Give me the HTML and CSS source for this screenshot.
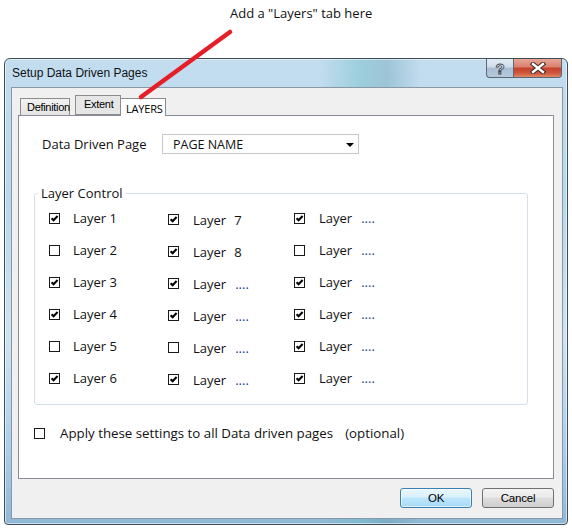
FILE: index.html
```html
<!DOCTYPE html>
<html>
<head>
<meta charset="utf-8">
<title>Setup Data Driven Pages</title>
<link rel="stylesheet" href="styles.css">
</head>
<body>
<div class="caption">Add a "Layers" tab here</div>
<svg class="annot" width="572" height="130" viewBox="0 0 572 130"><line x1="230" y1="32" x2="141" y2="97" stroke="#e61e27" stroke-width="4.5" stroke-linecap="round"/></svg>
<div class="window">
  <div class="titlebar">
    <span class="title">Setup Data Driven Pages</span>
    <div class="capbtns">
      <span class="capbtn help">?</span>
      <span class="capbtn close"><svg width="16" height="12" viewBox="0 0 16 12"><path d="M3 2 L13 10 M13 2 L3 10" stroke="#3a2a2a" stroke-width="4.4" stroke-linecap="square"/><path d="M3 2 L13 10 M13 2 L3 10" stroke="#fff" stroke-width="2.4" stroke-linecap="square"/></svg></span>
    </div>
  </div>
  <div class="client">
    <div class="tabs">
      <span class="tab">Definition</span>
      <span class="tab raised">Extent</span>
      <span class="tab active">LAYERS</span>
    </div>
    <div class="panel">
      <div class="ddp-row">
        <span class="lbl">Data Driven Page</span>
        <div class="select"><span>PAGE NAME</span><span class="arrow"></span></div>
      </div>
      <fieldset class="group">
        <legend>Layer Control</legend>
        <div class="grid">
          <div class="item"><span class="cb on"></span><span class="txt">Layer 1</span></div>
          <div class="item c2"><span class="cb on"></span><span class="txt">Layer<span class="num">7</span></span></div>
          <div class="item c3"><span class="cb on"></span><span class="txt">Layer<span class="dots">....</span></span></div>

          <div class="item"><span class="cb"></span><span class="txt">Layer 2</span></div>
          <div class="item c2"><span class="cb on"></span><span class="txt">Layer<span class="num">8</span></span></div>
          <div class="item c3"><span class="cb"></span><span class="txt">Layer<span class="dots">....</span></span></div>

          <div class="item"><span class="cb on"></span><span class="txt">Layer 3</span></div>
          <div class="item c2"><span class="cb on"></span><span class="txt">Layer<span class="dots">....</span></span></div>
          <div class="item c3"><span class="cb on"></span><span class="txt">Layer<span class="dots">....</span></span></div>

          <div class="item"><span class="cb on"></span><span class="txt">Layer 4</span></div>
          <div class="item c2"><span class="cb on"></span><span class="txt">Layer<span class="dots">....</span></span></div>
          <div class="item c3"><span class="cb on"></span><span class="txt">Layer<span class="dots">....</span></span></div>

          <div class="item"><span class="cb"></span><span class="txt">Layer 5</span></div>
          <div class="item c2"><span class="cb"></span><span class="txt">Layer<span class="dots">....</span></span></div>
          <div class="item c3"><span class="cb on"></span><span class="txt">Layer<span class="dots">....</span></span></div>

          <div class="item"><span class="cb on"></span><span class="txt">Layer 6</span></div>
          <div class="item c2"><span class="cb on"></span><span class="txt">Layer<span class="dots">....</span></span></div>
          <div class="item c3"><span class="cb on"></span><span class="txt">Layer<span class="dots">....</span></span></div>
        </div>
      </fieldset>
      <div class="apply">
        <span class="cb"></span>
        <span class="apply-txt">Apply these settings to all Data driven pages</span>
        <span class="opt">(optional)</span>
      </div>
    </div>
    <div class="footer">
      <span class="btn default">OK</span>
      <span class="btn">Cancel</span>
    </div>
  </div>
</div>
</body>
</html>
```

FILE: styles.css
```css
* { box-sizing: border-box; }
html, body { margin: 0; padding: 0; }
body {
  width: 572px;
  height: 528px;
  background: #fff;
  font-family: "Open Sans", "Noto Sans", sans-serif;
  color: #111;
  overflow: hidden;
  position: relative;
}
.caption {
  height: 58px;
  padding: 4px 0 0 230px;
  font-size: 13px;
  line-height: 18px;
  color: #111;
}
.annot {
  position: absolute;
  left: 0;
  top: 0;
  pointer-events: none;
  z-index: 5;
}
.window {
  margin-left: 4px;
  width: 564px;
  height: 467px;
  border: 1px solid #3f4d58;
  border-radius: 6px 6px 4px 4px;
  padding: 0 4px 5px 6px;
  display: flex;
  flex-direction: column;
  background:
    linear-gradient(90deg, rgba(255,255,255,0) 0, rgba(255,255,255,0) 56%, rgba(110,190,200,0.45) 63%, rgba(90,150,170,0.35) 68%, rgba(255,255,255,0) 74%),
    linear-gradient(180deg, #c3ddef 0, #b8d8ec 30%, #cfe3f2 60%, #a8cdeb 85%, #8fb7d6 100%);
  box-shadow: inset 0 0 0 1px rgba(255,255,255,0.55);
}
.titlebar {
  height: 28px;
  display: flex;
  align-items: flex-start;
  justify-content: space-between;
  padding-left: 1px;
}
.title {
  font-family: "Liberation Sans", Arial, sans-serif;
  font-size: 12px;
  line-height: 28px;
  color: #111;
}
.capbtns {
  display: flex;
  margin-right: 1px;
}
.capbtn {
  height: 19px;
  display: flex;
  align-items: center;
  justify-content: center;
  border: 1px solid #5b6772;
  border-top: none;
}
.help {
  width: 27px;
  border-radius: 0 0 0 4px;
  border-right: none;
  background: linear-gradient(180deg, #e2ebf4 0, #cfdcea 45%, #a9bed3 50%, #b7cadc 100%);
  font-family: "Liberation Sans", Arial, sans-serif;
  font-weight: bold;
  font-size: 15px;
  color: #f4f6f8;
  -webkit-text-stroke: 0.9px #3a4550;
}
.close {
  width: 49px;
  border-radius: 0 0 4px 0;
  background: linear-gradient(180deg, #e9a596 0, #d9806c 45%, #c4402a 50%, #d05a3f 80%, #e08a68 100%);
}
.client {
  flex: 1;
  background: #f0f0f0;
  border: 1px solid #8a98a5;
  display: flex;
  flex-direction: column;
  padding: 0 8px 0 6px;
}
.tabs {
  height: 27px;
  display: flex;
  align-items: flex-end;
  padding-left: 2px;
  position: relative;
  z-index: 1;
}
.tab {
  height: 17px;
  border: 1px solid #8c8c8c;
  border-bottom: none;
  background: linear-gradient(180deg, #f2f2f2 0, #e4e4e4 100%);
  font-family: "Liberation Sans", Arial, sans-serif;
  font-size: 11px;
  letter-spacing: -0.3px;
  line-height: 17px;
  padding: 0 6px;
  color: #000;
}
.tab + .tab { margin-left: -1px; }
.tab:first-child { width: 50px; padding-left: 6px; margin-right: 5px; }
.tab.raised {
  height: 20px;
  width: 46px;
  margin-left: 0;
  line-height: 17px;
  padding-left: 8px;
  background: #e6e6e6;
  border-bottom: 1px solid #8c8c8c;
  margin-bottom: 0;
}
.tab.active {
  height: 18px;
  width: 46px;
  margin-bottom: -1px;
  background: #fff;
  font-family: "Open Sans", sans-serif;
  font-size: 11px;
  letter-spacing: -0.2px;
  padding-left: 5px;
  line-height: 19px;
}
.panel {
  height: 364px;
  background: #fff;
  border: 1px solid #898c95;
  padding: 18px 0 0 23px;
  display: flex;
  flex-direction: column;
}
.ddp-row {
  display: flex;
  align-items: center;
  height: 20px;
}
.lbl {
  font-size: 13px;
  width: 120px;
}
.select {
  width: 197px;
  height: 20px;
  border: 1px solid #c9c9c9;
  background: #fff;
  display: flex;
  align-items: center;
  justify-content: space-between;
  padding: 0 4px 0 10px;
  font-size: 12.5px;
}
.arrow {
  width: 0;
  height: 0;
  border-left: 4px solid transparent;
  border-right: 4px solid transparent;
  border-top: 4px solid #000;
  margin-top: 1px;
}
.group {
  margin: 30px 0 0 -8px;
  width: 494px;
  border: 1px solid #d5dfe5;
  border-radius: 3px;
  padding: 0 0 10px 14px;
  min-width: 0;
}
.group legend {
  margin-left: -11px;
  padding: 0 3px;
  font-size: 13px;
  line-height: 18px;
}
.grid {
  display: grid;
  grid-template-columns: 119px 126px 1fr;
  grid-auto-rows: 32px;
}
.item {
  display: flex;
  align-items: center;
  gap: 13px;
}
.item.c2, .item.c3 { gap: 14px; }
.item.c2 { padding-top: 3px; }
.cb {
  width: 11px;
  height: 11px;
  border: 1px solid #1a1a1a;
  background: #fff;
  flex: none;
}
.cb.on {
  background:
    url("data:image/svg+xml;utf8,<svg xmlns='http://www.w3.org/2000/svg' width='9' height='9' viewBox='0 0 9 9'><path d='M1.6 4.2 L3.6 6.3 L7.6 2' fill='none' stroke='black' stroke-width='2'/></svg>") center/9px 9px no-repeat,
    #fff;
}
.txt {
  font-size: 13px;
  line-height: 18px;
  white-space: nowrap;
}
.num { margin-left: 8px; }
.dots {
  margin-left: 9px;
  color: #1d3b8a;
}
.apply {
  display: flex;
  align-items: center;
  height: 18px;
  margin: 19px 0 0 -8px;
  font-size: 13.3px;
}
.apply .cb { margin-right: 15px; }
.opt { margin-left: 12px; }
.footer {
  display: flex;
  justify-content: flex-end;
  gap: 10px;
  padding-top: 9px;
}
.btn {
  width: 72px;
  height: 20px;
  border: 1px solid #707070;
  border-radius: 3px;
  background: linear-gradient(180deg, #f3f3f3 0, #ebebeb 45%, #dddddd 50%, #cfcfcf 100%);
  font-family: "Liberation Sans", Arial, sans-serif;
  font-size: 11.5px;
  letter-spacing: -0.2px;
  display: flex;
  align-items: center;
  justify-content: center;
  color: #000;
}
.btn.default {
  border-color: #3c7fb1;
  background: linear-gradient(180deg, #eaf6fd 0, #d9f0fc 45%, #bee6fd 50%, #a7d9f5 100%);
  box-shadow: inset 0 0 0 1px rgba(255,255,255,0.6);
}
```
